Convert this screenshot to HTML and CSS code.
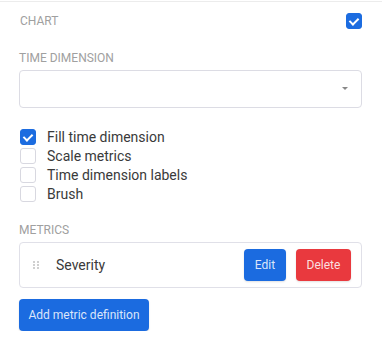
FILE: index.html
```html
<!DOCTYPE html>
<html lang="en">
<head>
    <meta charset="UTF-8">
    <title>Chart settings</title>
    <link rel="stylesheet" href="styles.css">
</head>
<body>
    <div class="panel">
        <div class="row-head">
            <span class="label">Chart</span>
            <span class="check on"></span>
        </div>

        <div class="label field-label">Time dimension</div>
        <div class="select">
            <span class="caret"></span>
        </div>

        <ul class="options">
            <li><span class="check on"></span>Fill time dimension</li>
            <li><span class="check"></span>Scale metrics</li>
            <li><span class="check"></span>Time dimension labels</li>
            <li><span class="check"></span>Brush</li>
        </ul>

        <div class="label metrics-label">Metrics</div>
        <div class="metric">
            <span class="handle">
                <i></i><i></i><i></i><i></i><i></i><i></i>
            </span>
            <span class="metric-name">Severity</span>
            <button class="btn btn-blue btn-edit">Edit</button>
            <button class="btn btn-red">Delete</button>
        </div>

        <button class="btn btn-blue btn-add">Add metric definition</button>
    </div>
</body>
</html>
```

FILE: styles.css
```css
body { margin: 0; font-family: Roboto, 'Liberation Sans', sans-serif; background: #fff; color: #333; }
.panel { margin-top: 1px; border-top: 1px solid #ececec; padding: 0 20px 0 19px; }
.label { font-size: 12px; line-height: 14px; text-transform: uppercase; color: #a0a0a0; }
.row-head { display: flex; justify-content: space-between; align-items: center; margin-top: 11px; height: 16px; }
.row-head .label { padding-left: 1px; }
.check { display: inline-block; box-sizing: border-box; width: 16px; height: 16px; border: 1px solid #d8d8e0; border-radius: 3px; background: #fff; position: relative; }
.check.on { background: #1c6ce0; border-color: #1c6ce0; }
.check.on::after { content: ''; position: absolute; left: 4px; top: 2px; width: 4px; height: 7px; border: solid #fff; border-width: 0 2px 2px 0; transform: rotate(45deg); }
.field-label { margin-top: 22px; }
.select { margin-top: 5px; height: 38px; box-sizing: border-box; border: 1px solid #dcdce4; border-radius: 4px; position: relative; }
.caret { position: absolute; right: 13px; top: 16px; width: 0; height: 0; border-left: 3px solid transparent; border-right: 3px solid transparent; border-top: 3px solid #888; }
.options { list-style: none; margin: 19px 0 0; padding: 0 0 0 1px; }
.options li { display: flex; align-items: center; height: 19px; font-size: 14px; color: #3a3a3a; }
.options .check { margin-right: 11px; }
.metrics-label { margin-top: 20px; }
.metric { margin-top: 5px; display: flex; align-items: center; box-sizing: border-box; height: 46px; border: 1px solid #e0e0e8; border-radius: 4px; padding: 0 10px 0 13px; }
.handle { display: grid; grid-template-columns: 2px 2px; gap: 1px 2px; width: 6px; }
.handle i { width: 2px; height: 2px; background: #d0d0d0; }
.metric-name { flex: 1; margin-left: 17px; font-size: 14px; color: #3a3a3a; }
.btn { border: none; border-radius: 4px; height: 32px; font-family: inherit; font-size: 12px; color: rgba(255,255,255,0.85); padding: 0; cursor: pointer; box-shadow: 0 1px 2px rgba(0,0,0,0.12); }
.btn-blue { background: #1b6be0; }
.btn-red { background: #e9393e; width: 55px; }
.btn-edit { width: 42px; margin-right: 10px; }
.btn-add { margin-top: 11px; width: 130px; }
```
